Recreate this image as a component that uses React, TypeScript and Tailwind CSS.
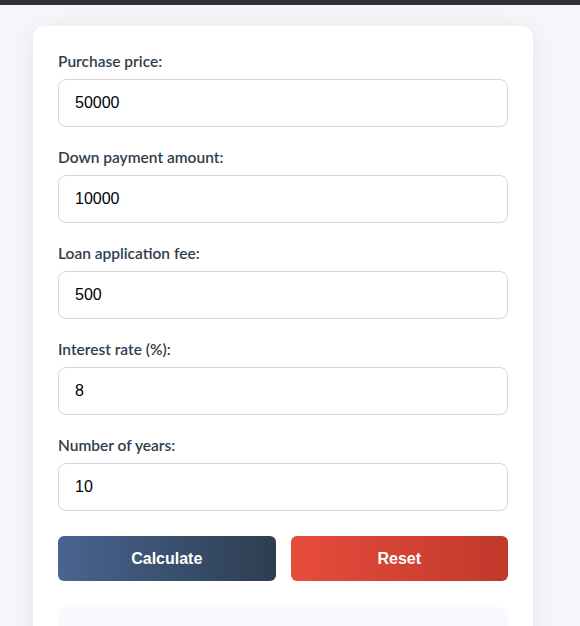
const fields = [
  { id: 'price', label: 'Purchase price:', value: '50000' },
  { id: 'down', label: 'Down payment amount:', value: '10000' },
  { id: 'fee', label: 'Loan application fee:', value: '500' },
  { id: 'rate', label: 'Interest rate (%):', value: '8' },
  { id: 'years', label: 'Number of years:', value: '10' },
];

export default function App() {
  return (
    <div className="min-h-screen overflow-hidden bg-[#f5f6f9] font-['Liberation_Sans',Arial,sans-serif]">
      <div className="h-[5px] bg-[#333333]" />
      <div className="pl-[33px] pt-[21px]">
        <div className="w-[500px] rounded-xl bg-white px-[25px] pt-[25px] pb-[30px] shadow-[0_4px_24px_rgba(0,0,0,0.07)]">
          <form className="flex flex-col gap-5">
            {fields.map((f) => (
              <div key={f.id}>
                <label
                  htmlFor={f.id}
                  className="mb-2 block font-['Lato',sans-serif] text-[15.5px] leading-5 font-semibold text-[#2f3e4e]"
                >
                  {f.label}
                </label>
                <input
                  id={f.id}
                  type="text"
                  defaultValue={f.value}
                  className="block h-12 w-full rounded-lg border border-[#d4d6dc] bg-white px-4 text-base text-black outline-none"
                />
              </div>
            ))}
          </form>
          <div className="mt-[25px] flex gap-[15px]">
            <button
              type="button"
              className="h-[45px] flex-1 rounded-md bg-gradient-to-r from-[#4a6491] to-[#2c3e50] text-base font-bold text-white"
            >
              Calculate
            </button>
            <button
              type="button"
              className="h-[45px] flex-1 rounded-md bg-gradient-to-r from-[#e74c3c] to-[#c0392b] text-base font-bold text-white"
            >
              Reset
            </button>
          </div>
          <div className="mt-[26px] h-40 rounded-lg bg-[#f8f9fc]" />
        </div>
      </div>
    </div>
  );
}
